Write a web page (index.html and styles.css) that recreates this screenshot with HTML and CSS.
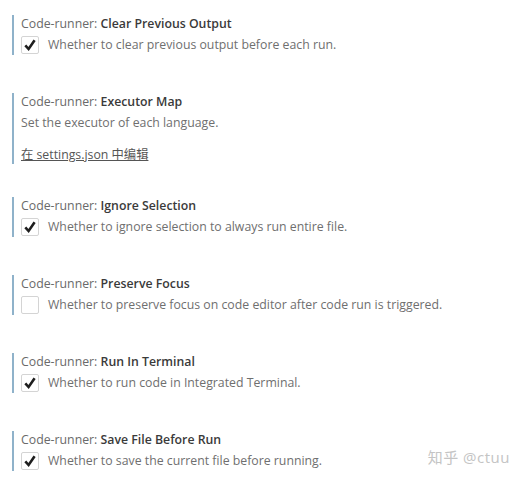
FILE: index.html
```html
<!DOCTYPE html>
<html lang="en">
<head>
    <meta charset="UTF-8">
    <title>Code-runner settings</title>
    <link rel="stylesheet" href="styles.css">
</head>
<body>
<div class="settings">
    <div class="setting">
        <div class="setting-title">Code-runner: <b>Clear Previous Output</b></div>
        <div class="setting-row">
            <span class="check on"><svg width="18" height="18" viewBox="0 0 18 18"><path d="M4.3 9.3 L7.6 13 L13.6 4.3" fill="none" stroke="#1e1e1e" stroke-width="2.6"/></svg></span>
            <span class="setting-desc">Whether to clear previous output before each run.</span>
        </div>
    </div>
    <div class="setting setting-map">
        <div class="setting-title">Code-runner: <b>Executor Map</b></div>
        <div class="setting-text">Set the executor of each language.</div>
        <div class="setting-link"><a href="#">在 settings.json 中编辑</a></div>
    </div>
    <div class="setting">
        <div class="setting-title">Code-runner: <b>Ignore Selection</b></div>
        <div class="setting-row">
            <span class="check on"><svg width="18" height="18" viewBox="0 0 18 18"><path d="M4.3 9.3 L7.6 13 L13.6 4.3" fill="none" stroke="#1e1e1e" stroke-width="2.6"/></svg></span>
            <span class="setting-desc">Whether to ignore selection to always run entire file.</span>
        </div>
    </div>
    <div class="setting">
        <div class="setting-title">Code-runner: <b>Preserve Focus</b></div>
        <div class="setting-row">
            <span class="check"></span>
            <span class="setting-desc">Whether to preserve focus on code editor after code run is triggered.</span>
        </div>
    </div>
    <div class="setting">
        <div class="setting-title">Code-runner: <b>Run In Terminal</b></div>
        <div class="setting-row">
            <span class="check on"><svg width="18" height="18" viewBox="0 0 18 18"><path d="M4.3 9.3 L7.6 13 L13.6 4.3" fill="none" stroke="#1e1e1e" stroke-width="2.6"/></svg></span>
            <span class="setting-desc">Whether to run code in Integrated Terminal.</span>
        </div>
    </div>
    <div class="setting">
        <div class="setting-title">Code-runner: <b>Save File Before Run</b></div>
        <div class="setting-row">
            <span class="check on"><svg width="18" height="18" viewBox="0 0 18 18"><path d="M4.3 9.3 L7.6 13 L13.6 4.3" fill="none" stroke="#1e1e1e" stroke-width="2.6"/></svg></span>
            <span class="setting-desc">Whether to save the current file before running.</span>
        </div>
    </div>
</div>
<div class="mark">知乎 @ctuu</div>
</body>
</html>
```

FILE: styles.css
```css
*{margin: 0px;padding: 0px;}
body{
    background: #fff;
    font-family: "Open Sans", "Noto Sans CJK SC", sans-serif;
    font-size: 12.3px;
    color: #6f6f6f;
    position: relative;
    width: 518px;
    height: 496px;
    overflow: hidden;
}
.settings{
    padding: 15px 0 0 12px;
}
.setting{
    border-left: 2px solid #8fb2ca;
    padding-left: 7px;
    margin-bottom: 38px;
}
.setting-map{
    margin-bottom: 33px;
}
.setting-title{
    height: 18px;
    line-height: 18px;
    color: #6a6a6a;
}
.setting-title b{
    font-weight: 600;
    color: #3a3a3a;
}
.setting-row{
    display: flex;
    align-items: center;
    margin-top: 3px;
    height: 18px;
    padding-bottom: 1px;
}
.check{
    width: 16px;
    height: 16px;
    border: 1px solid #d4d4d4;
    border-radius: 2px;
    display: flex;
    align-items: center;
    justify-content: center;
    margin-right: 9px;
}
.check svg{
    flex: none;
}
.setting-desc{
    line-height: 18px;
}
.setting-text{
    margin-top: 3px;
    line-height: 18px;
}
.setting-link{
    margin-top: 14px;
    line-height: 18px;
}
.setting-link a{
    color: #555;
    text-decoration: underline;
}
.mark{
    position: absolute;
    right: 8px;
    top: 446px;
    font-size: 15px;
    color: #c4c4c4;
    letter-spacing: 0.5px;
}
```
